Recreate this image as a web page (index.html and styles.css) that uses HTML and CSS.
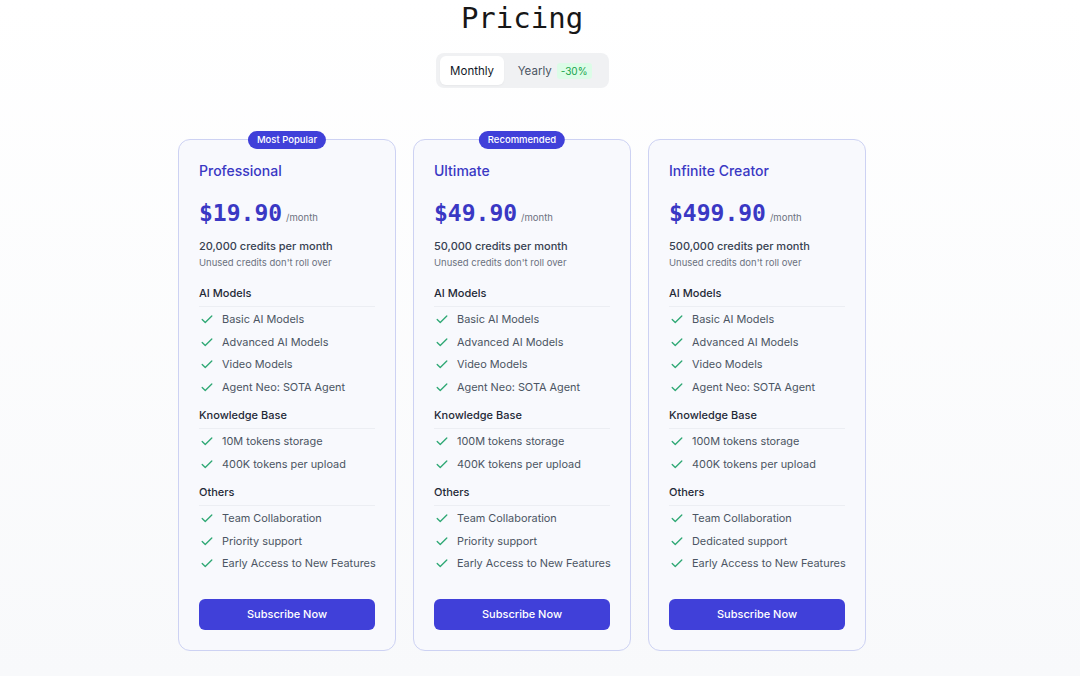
FILE: index.html
```html
<!DOCTYPE html>
<html lang="en">
<head>
<meta charset="utf-8">
<title>Pricing</title>
<link rel="stylesheet" href="styles.css">
</head>
<body>
<main class="page">
  <h1 class="title">Pricing</h1>
  <div class="toggle">
    <button class="toggle-btn active">Monthly</button>
    <button class="toggle-btn">Yearly <span class="save">-30%</span></button>
  </div>

  <section class="plans">
    <article class="card">
      <span class="badge">Most Popular</span>
      <h2 class="plan-name">Professional</h2>
      <div class="price"><span class="amount">$19.90</span><span class="per">/month</span></div>
      <p class="credits">20,000 credits per month</p>
      <p class="note">Unused credits don't roll over</p>
      <h3 class="group">AI Models</h3>
      <ul class="features">
        <li><svg class="check" viewBox="0 0 16 16"><path d="M2.5 8.5l3.5 3.5 7.5-7.5"/></svg>Basic AI Models</li>
        <li><svg class="check" viewBox="0 0 16 16"><path d="M2.5 8.5l3.5 3.5 7.5-7.5"/></svg>Advanced AI Models</li>
        <li><svg class="check" viewBox="0 0 16 16"><path d="M2.5 8.5l3.5 3.5 7.5-7.5"/></svg>Video Models</li>
        <li><svg class="check" viewBox="0 0 16 16"><path d="M2.5 8.5l3.5 3.5 7.5-7.5"/></svg>Agent Neo: SOTA Agent</li>
      </ul>
      <h3 class="group">Knowledge Base</h3>
      <ul class="features">
        <li><svg class="check" viewBox="0 0 16 16"><path d="M2.5 8.5l3.5 3.5 7.5-7.5"/></svg>10M tokens storage</li>
        <li><svg class="check" viewBox="0 0 16 16"><path d="M2.5 8.5l3.5 3.5 7.5-7.5"/></svg>400K tokens per upload</li>
      </ul>
      <h3 class="group">Others</h3>
      <ul class="features">
        <li><svg class="check" viewBox="0 0 16 16"><path d="M2.5 8.5l3.5 3.5 7.5-7.5"/></svg>Team Collaboration</li>
        <li><svg class="check" viewBox="0 0 16 16"><path d="M2.5 8.5l3.5 3.5 7.5-7.5"/></svg>Priority support</li>
        <li><svg class="check" viewBox="0 0 16 16"><path d="M2.5 8.5l3.5 3.5 7.5-7.5"/></svg>Early Access to New Features</li>
      </ul>
      <button class="subscribe">Subscribe Now</button>
    </article>

    <article class="card">
      <span class="badge">Recommended</span>
      <h2 class="plan-name">Ultimate</h2>
      <div class="price"><span class="amount">$49.90</span><span class="per">/month</span></div>
      <p class="credits">50,000 credits per month</p>
      <p class="note">Unused credits don't roll over</p>
      <h3 class="group">AI Models</h3>
      <ul class="features">
        <li><svg class="check" viewBox="0 0 16 16"><path d="M2.5 8.5l3.5 3.5 7.5-7.5"/></svg>Basic AI Models</li>
        <li><svg class="check" viewBox="0 0 16 16"><path d="M2.5 8.5l3.5 3.5 7.5-7.5"/></svg>Advanced AI Models</li>
        <li><svg class="check" viewBox="0 0 16 16"><path d="M2.5 8.5l3.5 3.5 7.5-7.5"/></svg>Video Models</li>
        <li><svg class="check" viewBox="0 0 16 16"><path d="M2.5 8.5l3.5 3.5 7.5-7.5"/></svg>Agent Neo: SOTA Agent</li>
      </ul>
      <h3 class="group">Knowledge Base</h3>
      <ul class="features">
        <li><svg class="check" viewBox="0 0 16 16"><path d="M2.5 8.5l3.5 3.5 7.5-7.5"/></svg>100M tokens storage</li>
        <li><svg class="check" viewBox="0 0 16 16"><path d="M2.5 8.5l3.5 3.5 7.5-7.5"/></svg>400K tokens per upload</li>
      </ul>
      <h3 class="group">Others</h3>
      <ul class="features">
        <li><svg class="check" viewBox="0 0 16 16"><path d="M2.5 8.5l3.5 3.5 7.5-7.5"/></svg>Team Collaboration</li>
        <li><svg class="check" viewBox="0 0 16 16"><path d="M2.5 8.5l3.5 3.5 7.5-7.5"/></svg>Priority support</li>
        <li><svg class="check" viewBox="0 0 16 16"><path d="M2.5 8.5l3.5 3.5 7.5-7.5"/></svg>Early Access to New Features</li>
      </ul>
      <button class="subscribe">Subscribe Now</button>
    </article>

    <article class="card">
      <h2 class="plan-name">Infinite Creator</h2>
      <div class="price"><span class="amount">$499.90</span><span class="per">/month</span></div>
      <p class="credits">500,000 credits per month</p>
      <p class="note">Unused credits don't roll over</p>
      <h3 class="group">AI Models</h3>
      <ul class="features">
        <li><svg class="check" viewBox="0 0 16 16"><path d="M2.5 8.5l3.5 3.5 7.5-7.5"/></svg>Basic AI Models</li>
        <li><svg class="check" viewBox="0 0 16 16"><path d="M2.5 8.5l3.5 3.5 7.5-7.5"/></svg>Advanced AI Models</li>
        <li><svg class="check" viewBox="0 0 16 16"><path d="M2.5 8.5l3.5 3.5 7.5-7.5"/></svg>Video Models</li>
        <li><svg class="check" viewBox="0 0 16 16"><path d="M2.5 8.5l3.5 3.5 7.5-7.5"/></svg>Agent Neo: SOTA Agent</li>
      </ul>
      <h3 class="group">Knowledge Base</h3>
      <ul class="features">
        <li><svg class="check" viewBox="0 0 16 16"><path d="M2.5 8.5l3.5 3.5 7.5-7.5"/></svg>100M tokens storage</li>
        <li><svg class="check" viewBox="0 0 16 16"><path d="M2.5 8.5l3.5 3.5 7.5-7.5"/></svg>400K tokens per upload</li>
      </ul>
      <h3 class="group">Others</h3>
      <ul class="features">
        <li><svg class="check" viewBox="0 0 16 16"><path d="M2.5 8.5l3.5 3.5 7.5-7.5"/></svg>Team Collaboration</li>
        <li><svg class="check" viewBox="0 0 16 16"><path d="M2.5 8.5l3.5 3.5 7.5-7.5"/></svg>Dedicated support</li>
        <li><svg class="check" viewBox="0 0 16 16"><path d="M2.5 8.5l3.5 3.5 7.5-7.5"/></svg>Early Access to New Features</li>
      </ul>
      <button class="subscribe">Subscribe Now</button>
    </article>
  </section>
</main>
</body>
</html>
```

FILE: styles.css
```css
* { box-sizing: border-box; }
html, body { margin: 0; padding: 0; }
body {
  font-family: Inter, "Noto Sans", sans-serif;
  color: #1f2937;
  background: linear-gradient(to bottom, #ffffff 0%, #f8f9fb 100%);
  min-height: 676px;
}
.page {
  width: 1044px;
  display: flex;
  flex-direction: column;
  align-items: center;
}
.title {
  font-family: "DejaVu Sans Mono", "Liberation Mono", monospace;
  font-weight: 400;
  font-size: 29px;
  line-height: 36px;
  margin: 0;
  color: #171717;
}
.toggle {
  margin-top: 17px;
  display: flex;
  align-items: center;
  background: #f0f1f3;
  border-radius: 8px;
  padding: 3px 3px 3px 4px;
  height: 35px;
  width: 173px;
}
.toggle-btn {
  border: 0;
  background: transparent;
  font-family: Inter, sans-serif;
  font-size: 11.5px;
  color: #4b5563;
  height: 29px;
  padding: 0 14px;
  border-radius: 6px;
  display: flex;
  align-items: center;
  gap: 5px;
  cursor: pointer;
}
.toggle-btn.active {
  background: #ffffff;
  color: #111827;
  width: 68px;
  padding: 0 0 0 1px;
  justify-content: center;
  box-shadow: 0 1px 2px rgba(0,0,0,0.04);
}
.save {
  background: #dcfce7;
  color: #16a34a;
  font-size: 10px;
  padding: 2px 4px;
  border-radius: 3px;
}
.plans {
  margin-top: 51px;
  display: flex;
  gap: 17px;
  align-items: flex-start;
}
.card {
  position: relative;
  width: 218px;
  background: #f8f9fd;
  border: 1px solid #cdd2f3;
  border-radius: 12px;
  padding: 20px;
  display: flex;
  flex-direction: column;
}
.badge {
  position: absolute;
  top: -9px;
  left: 50%;
  transform: translateX(-50%);
  background: #4040d9;
  color: #ffffff;
  font-size: 9.5px;
  font-weight: 500;
  line-height: 18px;
  padding: 0 9px;
  border-radius: 9px;
  white-space: nowrap;
}
.plan-name {
  margin: 0;
  font-size: 14px;
  font-weight: 500;
  line-height: 22px;
  color: #3a38c4;
}
.price {
  margin-top: 16px;
  display: flex;
  align-items: baseline;
  gap: 4px;
}
.amount {
  font-family: "DejaVu Sans Mono", "Liberation Mono", monospace;
  font-weight: 700;
  font-size: 23px;
  line-height: 30px;
  color: #3a38c4;
}
.per {
  font-size: 9.5px;
  color: #6b7280;
}
.credits {
  margin: 10px 0 0;
  font-size: 11px;
  line-height: 16px;
  font-weight: 500;
  color: #374151;
}
.note {
  margin: 2px 0 0;
  font-size: 9.5px;
  line-height: 14px;
  color: #6b7280;
}
.group {
  margin: 15px 0 0;
  font-size: 11px;
  font-weight: 500;
  line-height: 16px;
  color: #1f2937;
  padding-bottom: 5px;
  border-bottom: 1px solid #eceef3;
}
.features + .group {
  margin-top: 9px;
}
.features {
  list-style: none;
  margin: 1px 0 0;
  padding: 0;
}
.features li {
  display: flex;
  align-items: center;
  gap: 8px;
  font-size: 10.9px;
  line-height: 22.5px;
  color: #4b5563;
  padding-left: 1px;
  white-space: nowrap;
}
.check {
  width: 14px;
  height: 14px;
  fill: none;
  stroke: #2ea874;
  stroke-width: 1.5;
  stroke-linecap: round;
  stroke-linejoin: round;
  flex: none;
}
.subscribe {
  margin-top: 24px;
  height: 31px;
  border: 0;
  border-radius: 6px;
  background: #4040d9;
  color: #ffffff;
  font-family: Inter, sans-serif;
  font-size: 11px;
  font-weight: 500;
  cursor: pointer;
}
```
